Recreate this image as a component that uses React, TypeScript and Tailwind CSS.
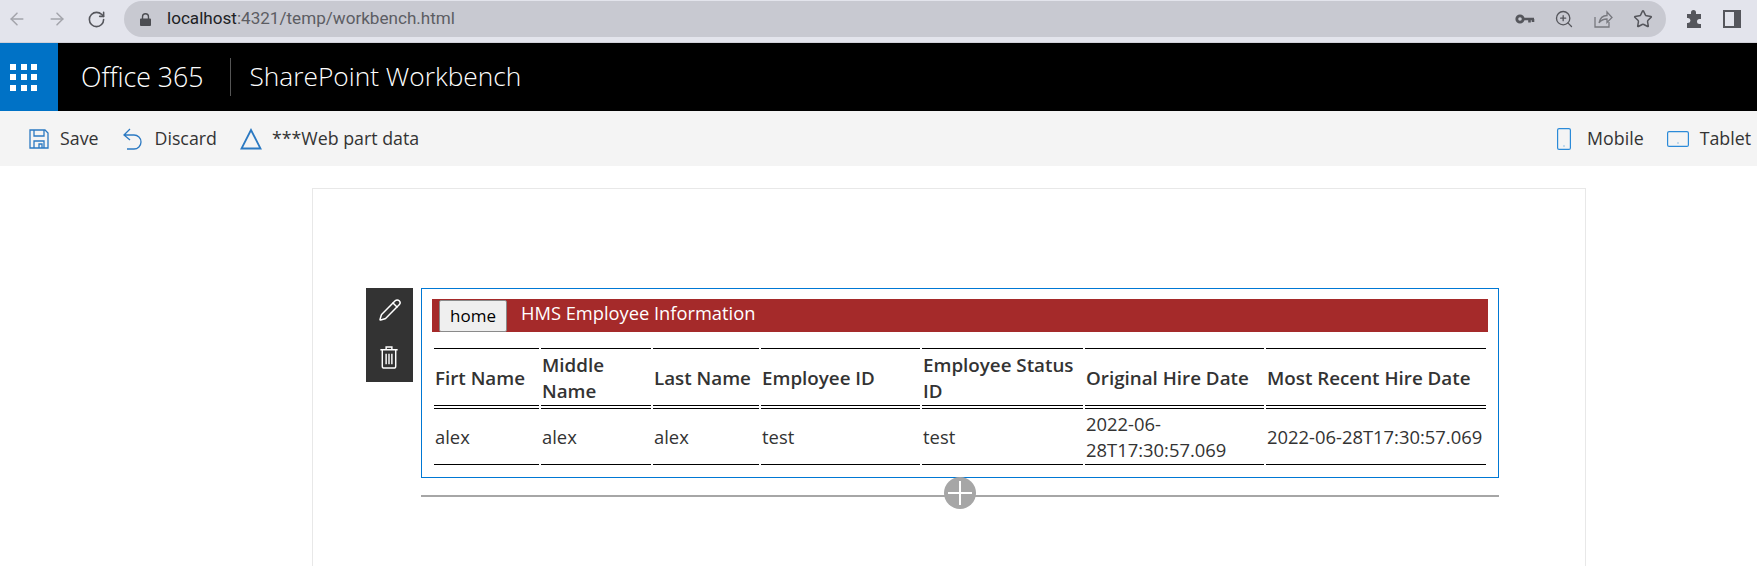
import { ArrowLeft, ArrowRight, Pencil, RotateCw, Star, ZoomIn } from "lucide-react";

const font = "font-['Open_Sans','Noto_Sans',sans-serif]";

const columns = ["Firt Name", "Middle Name", "Last Name", "Employee ID", "Employee Status ID", "Original Hire Date", "Most Recent Hire Date"];
const row = ["alex", "alex", "alex", "test", "test", "2022-06-28T17:30:57.069", "2022-06-28T17:30:57.069"];
const widths = ["w-[105px]", "w-[110px]", "w-[106px]", "w-[159px]", "w-[161px]", "w-[179px]", "w-[220px]"];

function BrowserBar() {
  return (
    <div className="flex h-[43px] items-center border-b border-[#d0d0d8] bg-[#e3e4ec] pb-[4px]">
      <ArrowLeft className="ml-[7px] h-[20px] w-[20px] text-[#a3a4ab]" strokeWidth={1.8} />
      <ArrowRight className="ml-[20px] h-[20px] w-[20px] text-[#a3a4ab]" strokeWidth={1.8} />
      <RotateCw className="ml-[20px] h-[19px] w-[19px] text-[#55565c]" strokeWidth={2} />
      <div className="ml-[18px] flex h-[36px] w-[1542px] items-center rounded-full bg-[#c8c9d1]">
        <svg viewBox="0 0 12 14" className="ml-[16px] h-[13px] w-[11px] fill-[#4c4d52]">
          <path d="M2 6V4a4 4 0 0 1 8 0v2h1a1 1 0 0 1 1 1v6a1 1 0 0 1-1 1H1a1 1 0 0 1-1-1V7a1 1 0 0 1 1-1zm1.500 0h5V4a2.500 2.500 0 0 0-5 0z" />
        </svg>
        <span className="ml-[16px] font-['Roboto',sans-serif] text-[17.100px] text-[#5c5d63]">
          <span className="text-[#202124]">localhost</span>:4321/temp/workbench.html
        </span>
        <div className="ml-auto flex items-center text-[#55565c]">
          <svg viewBox="0 0 20 12" className="h-[12px] w-[20px] fill-none stroke-[#55565c]">
            <circle cx="5" cy="6" r="3.200" strokeWidth="2.800" />
            <path d="M9 6h10M14.500 6v3.500M18 6v3" strokeWidth="2.600" />
          </svg>
          <ZoomIn className="ml-[19px] h-[20px] w-[20px]" strokeWidth={1.6} />
          <svg viewBox="0 0 20 20" className="ml-[19px] h-[20px] w-[20px] fill-none stroke-[#77787e]" strokeWidth="1.300">
            <path d="M2 8v10h14v-5M6 14c1-5 4-7.500 8-7.500V3l5 5.500-5 5V10c-3 0-6 1-8 4z" />
          </svg>
          <Star className="ml-[20px] mr-[13px] h-[20px] w-[20px]" strokeWidth={1.8} />
        </div>
      </div>
      <svg viewBox="0 0 20 20" className="ml-[18px] h-[20px] w-[20px] fill-[#55565c]">
        <path d="M7 3.500a2.500 2.500 0 0 1 5 0V5h5v5h-1.500a2.500 2.500 0 0 0 0 5H17v4H3v-5h1a2.500 2.500 0 0 0 0-5H3V5h4z" />
      </svg>
      <svg viewBox="0 0 18 18" className="ml-[19px] h-[18px] w-[18px] fill-none stroke-[#55565c]" strokeWidth="2">
        <rect x="1" y="1" width="16" height="16" />
        <rect x="12" y="1" width="5" height="16" className="fill-[#55565c]" />
      </svg>
    </div>
  );
}

function WaffleIcon() {
  return (
    <div className="grid grid-cols-3 gap-[4.500px]">
      {Array.from({ length: 9 }).map((_, i) => (
        <span key={i} className="h-[6px] w-[6px] bg-white" />
      ))}
    </div>
  );
}

function ToolbarButton({ icon, label, textClass }: { icon: React.ReactNode; label: string; textClass: string }) {
  return (
    <div className="flex items-center">
      {icon}
      <span className={`text-[17.800px] text-[#333333] ${textClass}`}>{label}</span>
    </div>
  );
}

function WebPart() {
  return (
    <div className="border border-[#0078d4] p-[10px]">
      <div className="flex h-[33px] items-center bg-[#a52a2a] pl-[7px]">
        <button className="mt-[1px] h-[32px] w-[68px] rounded-[2px] border border-[#8a8a8a] bg-[#efefef] text-[17px] text-black">home</button>
        <span className="ml-[14px] -translate-y-[3px] text-[18.300px] text-white">HMS Employee Information</span>
      </div>
      <table className="mt-[14px] w-[1056px] table-fixed border-separate border-spacing-[2px] text-[18.400px] leading-[26px] text-[#333333]">
        <thead>
          <tr>
            {columns.map((col, i) => (
              <th key={col} className={`${widths[i]} border-y border-b-[4px] border-t-black border-b-black [border-bottom-style:double] pb-[1px] pl-[1px] pr-[3px] pt-[3px] text-left text-[18.800px] font-semibold`}>{col}</th>
            ))}
          </tr>
        </thead>
        <tbody>
          <tr>
            {row.map((cell, i) => (
              <td key={i} className="border-b border-black pb-[1px] pl-[1px] [height:53px]">{i === 5 ? <>2022-06-<br />28T17:30:57.069</> : cell}</td>
            ))}
          </tr>
        </tbody>
      </table>
    </div>
  );
}

export default function App() {
  return (
    <div className={`h-[566px] w-[1757px] overflow-hidden bg-white ${font}`}>
      <BrowserBar />
      <div className="flex h-[68px] items-center bg-black text-white">
        <div className="flex h-full w-[58px] items-center bg-[#0072c6] pl-[10px]">
          <WaffleIcon />
        </div>
        <span className="ml-[23px] text-[26.700px] font-light">Office 365</span>
        <div className="ml-[27px] h-[38px] w-px bg-[#555555]" />
        <span className="ml-[18px] text-[26.300px] font-light">SharePoint Workbench</span>
      </div>
      <div className="flex h-[55px] items-center bg-[#f4f4f4] pl-[29px] pr-[6px]">
        <ToolbarButton
          textClass="ml-[11px]"
          label="Save"
          icon={
            <svg viewBox="0 0 20 20" className="h-[20px] w-[20px] fill-none stroke-[#2b79c2]" strokeWidth="1.300">
              <path d="M1 1h15l3 3v15H1zM5 1v6h10V1M5 19v-7h10v7M10 15h3v4h-3z" />
            </svg>
          }
        />
        <div className="ml-[23px]">
          <ToolbarButton
            textClass="ml-[13px]"
            label="Discard"
            icon={
              <svg viewBox="0 0 20 24" className="h-[24px] w-[20px] fill-none stroke-[#2b79c2]" strokeWidth="1.300">
                <path d="M8 2 2 8l6 5M2 8h10a6.500 6.500 0 0 1 0 14H5" />
              </svg>
            }
          />
        </div>
        <div className="ml-[23px]">
          <ToolbarButton
            textClass="ml-[10px]"
            label="***Web part data"
            icon={
              <svg viewBox="0 0 22 22" className="h-[22px] w-[22px] fill-none stroke-[#2b79c2]" strokeWidth="1.800">
                <path d="M11 2 1.500 20.500h19z" />
              </svg>
            }
          />
        </div>
        <div className="ml-auto flex items-center">
          <ToolbarButton
            textClass="ml-[16px]"
            label="Mobile"
            icon={
              <svg viewBox="0 0 14 22" className="h-[22px] w-[14px] fill-none stroke-[#2b8ad8]" strokeWidth="1.200">
                <rect x="0.600" y="0.600" width="12.800" height="20.800" rx="1.500" />
                <path d="M6.500 18h1" />
              </svg>
            }
          />
          <div className="ml-[23px]">
            <ToolbarButton
              textClass="ml-[11px]"
              label="Tablet"
              icon={
                <svg viewBox="0 0 22 16" className="h-[16px] w-[22px] fill-none stroke-[#2b8ad8]" strokeWidth="1.200">
                  <rect x="0.600" y="0.600" width="20.800" height="14.800" rx="1.500" />
                  <path d="M10.500 12h1" />
                </svg>
              }
            />
          </div>
        </div>
      </div>
      <div className="ml-[312px] mt-[22px] h-[400px] w-[1274px] border border-[#e8e8e8] pl-[53px] pr-[86px] pt-[99px]">
        <div className="flex items-start">
          <div className="flex h-[94px] w-[47px] flex-col items-center justify-center gap-[24px] bg-[#333333] pb-[4px] text-white">
            <Pencil className="h-[24px] w-[24px]" strokeWidth={1.500} />
            <svg viewBox="0 0 20 24" className="-ml-[2px] h-[23px] w-[20px] fill-none stroke-white" strokeWidth="1.500">
              <path d="M1 4h18M7 4V1h6v3M3 4v17a2 2 0 0 0 2 2h10a2 2 0 0 0 2-2V4" />
              <path d="M7 8v11M10 8v11M13 8v11" />
            </svg>
          </div>
          <div className="ml-[8px] flex-1">
            <WebPart />
            <div className="relative mt-[17px] h-[2px] bg-[#a6a6a6]">
              <div className="absolute -top-[18px] left-[523px] flex h-[32px] w-[32px] items-center justify-center rounded-full bg-[#a6a6a6]">
                <span className="absolute h-[24px] w-[2px] bg-white" />
                <span className="absolute h-[2px] w-[24px] bg-white" />
              </div>
            </div>
          </div>
        </div>
      </div>
    </div>
  );
}
